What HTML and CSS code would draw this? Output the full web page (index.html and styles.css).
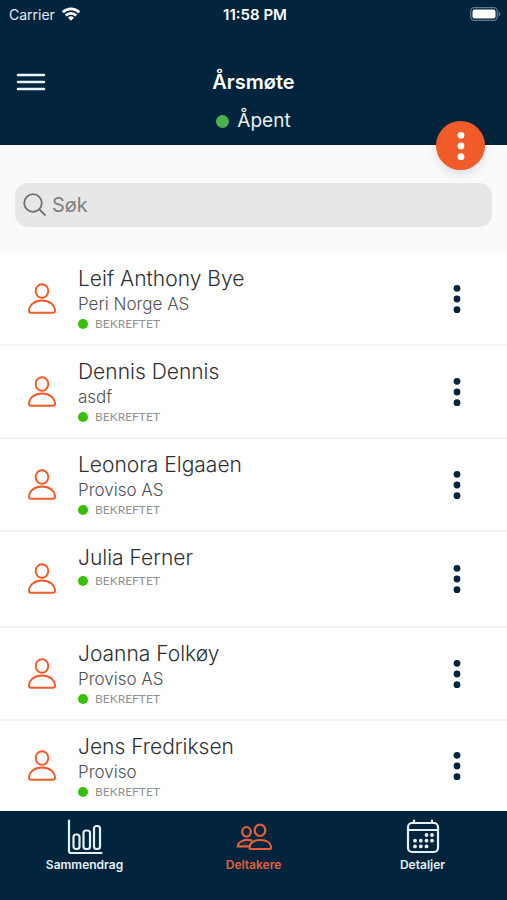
FILE: index.html
```html
<!DOCTYPE html>
<html lang="nb">
<head>
<meta charset="utf-8">
<meta name="viewport" content="width=device-width, initial-scale=1">
<title>Årsmøte</title>
<link rel="stylesheet" href="styles.css">
</head>
<body>
<svg class="symbols" aria-hidden="true">
  <symbol id="person" viewBox="0 0 28 32">
    <ellipse cx="14" cy="8" rx="6.300" ry="6.800"/>
    <path d="M1 28C1 22 6.500 17.500 14 17.500S27 22 27 28Q27 29.700 25 29.700H3Q1 29.700 1 28Z"/>
  </symbol>
  <symbol id="dots" viewBox="0 0 8 30">
    <circle cx="4" cy="4.300" r="3.400"/><circle cx="4" cy="15" r="3.400"/><circle cx="4" cy="25.700" r="3.400"/>
  </symbol>
</svg>
<header class="header">
  <div class="status-bar">
    <span class="carrier">Carrier
      <svg width="18" height="14" viewBox="0 0 18 14" fill="none" stroke="#fff" stroke-width="2.700"><path d="M.8 5.200a11.600 11.600 0 0 1 16.400 0M3.700 8.500a7.500 7.500 0 0 1 10.600 0"/><path d="M9 13.800 6 10.800a4.300 4.300 0 0 1 6 0Z" fill="#fff" stroke="none"/></svg>
    </span>
    <span class="clock">11:58 PM</span>
    <svg class="battery" width="31" height="14" viewBox="0 0 31 14"><rect x=".7" y=".7" width="26.600" height="12.600" rx="3.500" fill="none" stroke="#62788a" stroke-width="1.300"/><rect x="2.500" y="2.500" width="23" height="9" rx="2" fill="#fff"/><path d="M28.700 4.500c2.200.8 2.200 4.200 0 5Z" fill="#62788a"/></svg>
  </div>
  <div class="title-bar">
    <button class="menu" aria-label="Meny"><svg width="30" height="20" viewBox="0 0 30 20" stroke="#e9f5fa" stroke-width="2.600" stroke-linecap="round"><path d="M2 3H28M2 10H28M2 17H28"/></svg></button>
    <h1>Årsmøte</h1>
  </div>
  <p class="state"><i class="state-dot"></i>Åpent</p>
  <button class="fab" aria-label="Handlinger"><svg width="8" height="30"><use href="#dots"/></svg></button>
</header>
<main>
  <form class="search">
    <label class="search-box">
      <svg width="24" height="24" viewBox="0 0 24 24" fill="none" stroke="#707070" stroke-width="1.800"><circle cx="10" cy="10" r="8.800"/><path d="m16.300 16.300 6.200 6.200"/></svg>
      <input type="search" placeholder="Søk" aria-label="Søk">
    </label>
  </form>
  <ul class="people">
    <li class="row"><svg class="person"><use href="#person"/></svg><div class="info"><h2>Leif Anthony Bye</h2><p class="company">Peri Norge AS</p><p class="status">BEKREFTET</p></div><button class="more" aria-label="Mer"><svg width="8" height="30"><use href="#dots"/></svg></button></li>
    <li class="row"><svg class="person"><use href="#person"/></svg><div class="info"><h2>Dennis Dennis</h2><p class="company">asdf</p><p class="status">BEKREFTET</p></div><button class="more" aria-label="Mer"><svg width="8" height="30"><use href="#dots"/></svg></button></li>
    <li class="row"><svg class="person"><use href="#person"/></svg><div class="info"><h2>Leonora Elgaaen</h2><p class="company">Proviso AS</p><p class="status">BEKREFTET</p></div><button class="more" aria-label="Mer"><svg width="8" height="30"><use href="#dots"/></svg></button></li>
    <li class="row short"><svg class="person"><use href="#person"/></svg><div class="info"><h2>Julia Ferner</h2><p class="status">BEKREFTET</p></div><button class="more" aria-label="Mer"><svg width="8" height="30"><use href="#dots"/></svg></button></li>
    <li class="row"><svg class="person"><use href="#person"/></svg><div class="info"><h2>Joanna Folkøy</h2><p class="company">Proviso AS</p><p class="status">BEKREFTET</p></div><button class="more" aria-label="Mer"><svg width="8" height="30"><use href="#dots"/></svg></button></li>
    <li class="row"><svg class="person"><use href="#person"/></svg><div class="info"><h2>Jens Fredriksen</h2><p class="company">Proviso</p><p class="status">BEKREFTET</p></div><button class="more" aria-label="Mer"><svg width="8" height="30"><use href="#dots"/></svg></button></li>
  </ul>
</main>
<nav class="tabs">
  <a class="tab" href="#sammendrag"><svg width="36" height="36" viewBox="0 0 36 36"><path d="M2 1.500V32Q2 34 4 34H34.500"/><rect x="6.500" y="15.500" width="6" height="14.500" rx="2.500"/><rect x="16.500" y="11.500" width="6.500" height="18.500" rx="2.500"/><rect x="27" y="7" width="6" height="23" rx="2.500"/></svg>Sammendrag</a>
  <a class="tab active" href="#deltakere" aria-current="page"><svg width="36" height="36" viewBox="0 0 36 36"><ellipse cx="24" cy="11.300" rx="5.300" ry="5.700"/><path d="M13.500 28.500C13.500 24 18 21 24.500 21S35 24 35 28.500Q35 30 33.500 30H15Q13.500 30 13.500 28.500Z"/><ellipse cx="10.500" cy="12.800" rx="4.300" ry="4.800"/><path d="M15.500 21.300C8 19.800 2 23 1.800 27.300H12"/></svg>Deltakere</a>
  <a class="tab" href="#detaljer"><svg width="36" height="36" viewBox="0 0 36 36"><rect x="3" y="4" width="30" height="29" rx="4"/><path d="M3 11H33M9 1.500V4M27 1.500V4"/><g class="days"><circle cx="21.500" cy="16" r="1.900"/><circle cx="27" cy="16" r="1.900"/><circle cx="10" cy="21.700" r="1.900"/><circle cx="15.800" cy="21.700" r="1.900"/><circle cx="21.500" cy="21.700" r="1.900"/><circle cx="27" cy="21.700" r="1.900"/><circle cx="10" cy="27.400" r="1.900"/><circle cx="15.800" cy="27.400" r="1.900"/><circle cx="21.500" cy="27.400" r="1.900"/></g></svg>Detaljer</a>
</nav>
</body>
</html>
```
FILE: styles.css
```css
* { box-sizing: border-box; }
body {
  margin: 0;
  min-height: 100vh;
  display: flex;
  flex-direction: column;
  background: #fff;
  color: #303032;
  font-family: Inter, "Liberation Sans", sans-serif;
}
h1, h2, p, ul { margin: 0; padding: 0; font-weight: 400; }
button { padding: 0; border: 0; background: none; cursor: pointer; }
svg { display: block; flex: none; }
.symbols { position: absolute; width: 0; height: 0; }

.header { position: relative; background: #02253d; color: #fff; padding-bottom: 10px; }
.status-bar {
  display: grid;
  grid-template-columns: 1fr auto 1fr;
  align-items: center;
  height: 28px;
  padding: 0 6px 0 9px;
  font-size: 14px;
}
.carrier { display: flex; align-items: center; gap: 7px; color: #e3ebf0; }
.clock { font-size: 15px; font-weight: 600; }
.battery { justify-self: end; }
.title-bar {
  display: grid;
  grid-template-columns: 1fr auto 1fr;
  align-items: center;
  height: 54px;
  margin-top: 27px;
  padding: 0 16px;
}
.menu { justify-self: start; }
h1 { font-size: 20px; font-weight: 600; line-height: 28px; }
.state {
  display: flex;
  justify-content: center;
  align-items: center;
  gap: 8px;
  margin-top: -2px;
  font-size: 19px;
  line-height: 28px;
  color: #e9eff3;
}
.state-dot { width: 13px; height: 13px; border-radius: 50%; background: #4caf50; }
.fab {
  position: absolute;
  right: 22px;
  bottom: -25px;
  display: grid;
  place-items: center;
  width: 49px;
  height: 49px;
  border-radius: 50%;
  background: #f15a29;
  fill: #fff;
  box-shadow: 0 4px 10px rgba(0, 0, 0, .12);
}

main { flex: 1; }
.search { padding: 38px 15px 26px; background: #fafafa; }
.search-box {
  display: flex;
  align-items: center;
  gap: 5px;
  height: 44px;
  padding: 0 8px;
  border-radius: 13px;
  background: #e7e7e7;
}
.search-box input {
  flex: 1;
  min-width: 0;
  padding: 0;
  border: 0;
  outline: 0;
  background: none;
  font: 20px Inter, sans-serif;
  color: #38383a;
}
.search-box input::placeholder { color: #808080; opacity: 1; }

.people { list-style: none; }
.row {
  display: flex;
  align-items: center;
  min-height: 93px;
  padding: 0 42px 0 28px;
  border-bottom: 2px solid #f3f3f3;
}
.row.short { min-height: 96px; }
.row:last-child { border: 0; min-height: 90px; }
.person { width: 28px; height: 32px; fill: none; stroke: #f15a29; stroke-width: 1.9; }
.info { flex: 1; align-self: stretch; padding: 12px 0 8px 22px; }
h2 { font-size: 21px; font-weight: 300; line-height: 28px; }
.company { font-size: 17px; font-weight: 300; line-height: 22px; color: #505052; }
.status {
  display: flex;
  align-items: center;
  gap: 7px;
  font: 12px/18px Lato, sans-serif;
  color: #929292;
}
.status::before { content: ""; width: 10px; height: 10px; border-radius: 50%; background: #37c008; }
.more { width: 16px; display: grid; place-items: center; fill: #02253d; }

.tabs {
  display: grid;
  grid-template-columns: repeat(3, 1fr);
  height: 89px;
  padding-top: 8px;
  background: #02253d;
}
.tab {
  display: flex;
  flex-direction: column;
  align-items: center;
  gap: 2px;
  color: #e3f0f6;
  font-size: 12px;
  font-weight: 600;
  line-height: 16px;
  text-decoration: none;
}
.tab svg { fill: none; stroke: currentColor; stroke-width: 2.2; stroke-linecap: round; }
.tab .days { fill: currentColor; stroke: none; }
.tab.active { color: #e2613c; }
```
